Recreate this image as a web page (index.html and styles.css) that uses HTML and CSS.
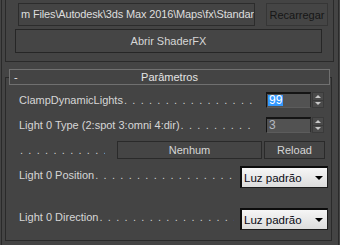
FILE: index.html
```html
<!DOCTYPE html>
<html lang="pt">

<head>
    <meta charset="UTF-8">
    <meta name="viewport" content="width=device-width, initial-scale=1.0">
    <title>Parâmetros</title>
    <link rel="stylesheet" href="styles.css">
</head>

<body>
    <div class="frame">
        <section class="top">
            <div class="path-row">
                <div class="path-field">m Files\Autodesk\3ds Max 2016\Maps\fx\StandardFX11.fx</div>
                <button class="btn btn-dim">Recarregar</button>
            </div>
            <button class="btn btn-wide">Abrir ShaderFX</button>
        </section>

        <section class="rollout">
            <div class="rollout-head">
                <span class="toggle">-</span>
                <span class="title">Parâmetros</span>
            </div>

            <div class="row row-spin">
                <span class="label">ClampDynamicLights<span class="dots">..............................</span></span>
                <div class="spinner">
                    <div class="spin-field"><span class="sel">99</span></div>
                    <div class="spin-arrows">
                        <span class="arr up"></span>
                        <span class="arr down"></span>
                    </div>
                </div>
            </div>

            <div class="row row-spin second">
                <span class="label">Light 0 Type (2:spot 3:omni 4:dir)<span class="dots">..............................</span></span>
                <div class="spinner">
                    <div class="spin-field"><span class="val">3</span></div>
                    <div class="spin-arrows">
                        <span class="arr up"></span>
                        <span class="arr down"></span>
                    </div>
                </div>
            </div>

            <div class="row row-map">
                <span class="label"><span class="dots">..............................</span></span>
                <button class="btn btn-map">Nenhum</button>
                <button class="btn btn-reload">Reload</button>
            </div>

            <div class="row row-drop">
                <span class="label">Light 0 Position<span class="dots">..............................</span></span>
                <div class="dropdown">Luz padrão<span class="caret"></span></div>
            </div>

            <div class="row row-drop last">
                <span class="label">Light 0 Direction<span class="dots">..............................</span></span>
                <div class="dropdown">Luz padrão<span class="caret"></span></div>
            </div>
        </section>
    </div>
</body>

</html>
```

FILE: styles.css
```css
* {
    box-sizing: border-box;
}

body {
    margin: 0;
    background-color: #444444;
    font-family: "Liberation Sans", Arial, sans-serif;
    font-size: 11px;
    color: #d6d6d6;
}

.frame {
    width: 338px;
    height: 245px;
    margin-left: 1px;
    border-left: 1px solid #2a2a2a;
    border-right: 1px solid #2a2a2a;
    overflow: hidden;
}

.top {
    width: 329px;
    height: 62px;
    margin-left: 3px;
    border-left: 1px solid #2a2a2a;
    border-right: 1px solid #2a2a2a;
    border-bottom: 1px solid #2a2a2a;
}

.path-row {
    display: flex;
    gap: 11px;
    padding-top: 3px;
    padding-left: 12px;
}

.path-field {
    width: 237px;
    height: 23px;
    padding: 4px 0 0 2px;
    border: 1px solid #2c2c2c;
    white-space: nowrap;
    overflow: hidden;
    letter-spacing: -0.15px;
    color: #dedede;
}

.btn {
    font-family: inherit;
    font-size: 11px;
    color: #d6d6d6;
    background-color: #454545;
    border: 1px solid #2a2a2a;
    padding: 0;
}

.btn-dim {
    width: 62px;
    height: 23px;
    color: #161616;
    border-color: #363636;
}

.btn-wide {
    display: block;
    width: 307px;
    height: 24px;
    margin: 3px 0 0 9px;
    border-color: #262626;
}

.rollout {
    width: 327px;
    margin: 15px 0 0 3px;
    padding-bottom: 10px;
    border: 1px solid #2a2a2a;
}

.rollout-head {
    display: flex;
    align-items: center;
    height: 16px;
    margin: -9px 1px 0 3px;
    padding-left: 4px;
    border: 1px solid #707070;
    background-color: #444444;
    position: relative;
}

.toggle {
    width: 10px;
    color: #e8e8e8;
}

.title {
    flex: 1;
    text-align: center;
    margin-right: 14px;
    color: #e4e4e4;
}

.row {
    display: flex;
    align-items: center;
    padding-left: 13px;
}

.label {
    flex: 1;
    white-space: nowrap;
    overflow: hidden;
}

.dots {
    letter-spacing: 5.3px;
    margin-left: 1px;
    color: #cfcfcf;
}

.row-spin {
    height: 16px;
    margin-top: 7px;
    padding-right: 7px;
}

.row-spin .label {
    margin-right: 14px;
}

.row-spin.second {
    margin-top: 9px;
}

.spinner {
    display: flex;
    gap: 1px;
    height: 16px;
}

.spin-field {
    width: 45px;
    height: 16px;
    padding: 1px 0 0 1px;
    background-color: #525252;
    border-top: 2px solid #141414;
    border-left: 1px solid #141414;
    border-right: 1px solid #2e2e2e;
    border-bottom: 1px solid #5c5c5c;
    line-height: 11px;
}

.sel {
    display: inline-block;
    padding: 0 1px;
    background-color: #3399ff;
    color: #ffffff;
    font-size: 12px;
    line-height: 11px;
}

.val {
    display: inline-block;
    padding-left: 1px;
    color: #b4b8c0;
    font-size: 12px;
}

.spin-arrows {
    display: flex;
    flex-direction: column;
    width: 12px;
    height: 16px;
    border: 1px solid #3a3a3a;
    background-color: #4a4a4a;
}

.arr {
    flex: 1;
    display: flex;
    align-items: center;
    justify-content: center;
}

.arr::before {
    content: "";
    border-left: 3px solid transparent;
    border-right: 3px solid transparent;
}

.arr.up {
    border-bottom: 1px solid #3a3a3a;
}

.arr.up::before {
    border-bottom: 3px solid #c8c8c8;
}

.arr.down::before {
    border-top: 3px solid #c8c8c8;
}

.row-map {
    height: 18px;
    margin-top: 8px;
    padding-right: 6px;
}

.row-map .label {
    margin-right: 12px;
}

.btn-map {
    width: 145px;
    height: 18px;
    margin-right: 2px;
}

.btn-reload {
    width: 61px;
    height: 18px;
}

.row-drop {
    height: 22px;
    margin-top: 7px;
    padding-right: 3px;
    align-items: flex-start;
}

.row-drop .label {
    margin-right: 6px;
    padding-top: 3px;
}

.row-drop.last {
    margin-top: 20px;
}

.dropdown {
    display: flex;
    align-items: center;
    width: 88px;
    height: 22px;
    padding-left: 2px;
    border-top: 2px solid #0c0c0c;
    border-left: 2px solid #0c0c0c;
    border-right: 1px solid #1c1c1c;
    border-bottom: 1px solid #1c1c1c;
    background: linear-gradient(#f6f6f6, #dcdcdc);
    color: #0a0a14;
    font-size: 11.5px;
}

.caret {
    margin-left: auto;
    margin-right: 4px;
    border-left: 4px solid transparent;
    border-right: 4px solid transparent;
    border-top: 4px solid #000000;
}
```
